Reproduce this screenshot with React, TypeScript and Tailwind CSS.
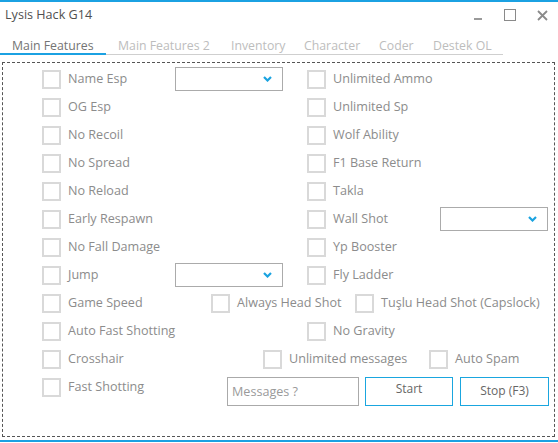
function Check({ label }: { label: string }) {
  return (
    <div className="flex items-center gap-[7px]">
      <span className="w-[19px] h-[19px] shrink-0 border-2 border-[#d9d9d9] bg-white" />
      <span className="text-[12.6px] text-[#8c8c8c] whitespace-nowrap leading-none">{label}</span>
    </div>
  );
}

function Select() {
  return (
    <div className="w-[108px] h-[24px] border border-[#ababab] bg-white flex items-center justify-end pr-[10px]">
      <svg width="9" height="6" viewBox="0 0 9 6">
        <path d="M1 1 L4.5 4.5 L8 1" fill="none" stroke="#1aa3e0" strokeWidth="2.2" />
      </svg>
    </div>
  );
}

// standard rows: columns at 42 / 175 / 307 / 440
function Row({ a, mid, b, right }: { a: string; mid?: boolean; b: string; right?: boolean }) {
  return (
    <div className="grid grid-cols-[133px_132px_133px_1fr] items-center h-[28px]">
      <Check label={a} />
      <div>{mid && <Select />}</div>
      <Check label={b} />
      <div>{right && <Select />}</div>
    </div>
  );
}

const tabs = [
  { name: "Main Features", w: "w-[106px]", active: true },
  { name: "Main Features 2", w: "w-[113px]" },
  { name: "Inventory", w: "w-[73px]" },
  { name: "Character", w: "w-[75px]" },
  { name: "Coder", w: "w-[54px]" },
  { name: "Destek OL", w: "w-[82px]" },
];

export default function App() {
  return (
    <div className="w-[558px] h-[443px] bg-white flex flex-col overflow-hidden font-['Open_Sans',_'Noto_Sans',_sans-serif]">
      <div className="h-[2px] bg-[#1ba1e2]" />

      {/* title bar */}
      <div className="h-[26px] flex items-center justify-between pl-[5px]">
        <span className="text-[12.6px] text-[#505050]">Lysis Hack G14</span>
        <div className="flex h-full">
          <div className="w-[32px] flex items-center justify-center pt-[8px]">
            <span className="w-[8px] h-[2px] bg-[#9a9a9a]" />
          </div>
          <div className="w-[32px] flex items-center justify-center">
            <span className="w-[12px] h-[12px] border-[1.5px] border-[#8a8a8a]" />
          </div>
          <div className="w-[32px] flex items-center justify-center">
            <svg width="11" height="11" viewBox="0 0 11 11">
              <path d="M1 1 L10 10 M10 1 L1 10" stroke="#8a8a8a" strokeWidth="1.8" />
            </svg>
          </div>
        </div>
      </div>

      {/* tabs */}
      <div className="flex w-[503px] h-[27px] border-b border-[#cfcfcf]">
        {tabs.map((t) => (
          <div
            key={t.name}
            className={`${t.w} pl-[12px] pt-[12px] leading-none text-[12.3px] whitespace-nowrap ${
              t.active ? "text-[#747474] border-b-2 border-[#1ba1e2] -mb-[1px]" : "text-[#bdbdbd]"
            }`}
          >
            {t.name}
          </div>
        ))}
      </div>

      {/* feature panel */}
      <div className="mt-[7px] ml-[2px] w-[553px] h-[375px] border border-dashed border-[#555] pt-[2px] pl-[39px]">
        <Row a="Name Esp" mid b="Unlimited Ammo" />
        <Row a="OG Esp" b="Unlimited Sp" />
        <Row a="No Recoil" b="Wolf Ability" />
        <Row a="No Spread" b="F1 Base Return" />
        <Row a="No Reload" b="Takla" />
        <Row a="Early Respawn" b="Wall Shot" right />
        <Row a="No Fall Damage" b="Yp Booster" />
        <Row a="Jump" mid b="Fly Ladder" />

        <div className="flex items-center h-[28px]">
          <div className="w-[169px]"><Check label="Game Speed" /></div>
          <div className="w-[144px]"><Check label="Always Head Shot" /></div>
          <Check label="Tuşlu Head Shot (Capslock)" />
        </div>

        <Row a="Auto Fast Shotting" b="No Gravity" />

        <div className="flex items-center h-[28px]">
          <div className="w-[221px]"><Check label="Crosshair" /></div>
          <div className="w-[166px]"><Check label="Unlimited messages" /></div>
          <Check label="Auto Spam" />
        </div>

        <div className="flex items-center h-[28px]">
          <div className="w-[185px]"><Check label="Fast Shotting" /></div>
          <div className="flex mt-[8px]">
            <input
              placeholder="Messages ?"
              className="w-[132px] h-[29px] border border-[#aaaaaa] px-[4px] text-[12.6px] text-[#888] placeholder:text-[#9a9a9a] outline-none"
            />
            <button className="ml-[6px] w-[88px] h-[29px] border border-[#1aa6df] text-[12px] text-[#666] pb-[4px] bg-white">
              Start
            </button>
            <button className="ml-[7px] w-[89px] h-[29px] border border-[#1aa6df] text-[12px] text-[#666] bg-white">
              Stop (F3)
            </button>
          </div>
        </div>
      </div>

      <div className="mt-[3px] h-[2px] bg-[#1ba1e2]" />
    </div>
  );
}
